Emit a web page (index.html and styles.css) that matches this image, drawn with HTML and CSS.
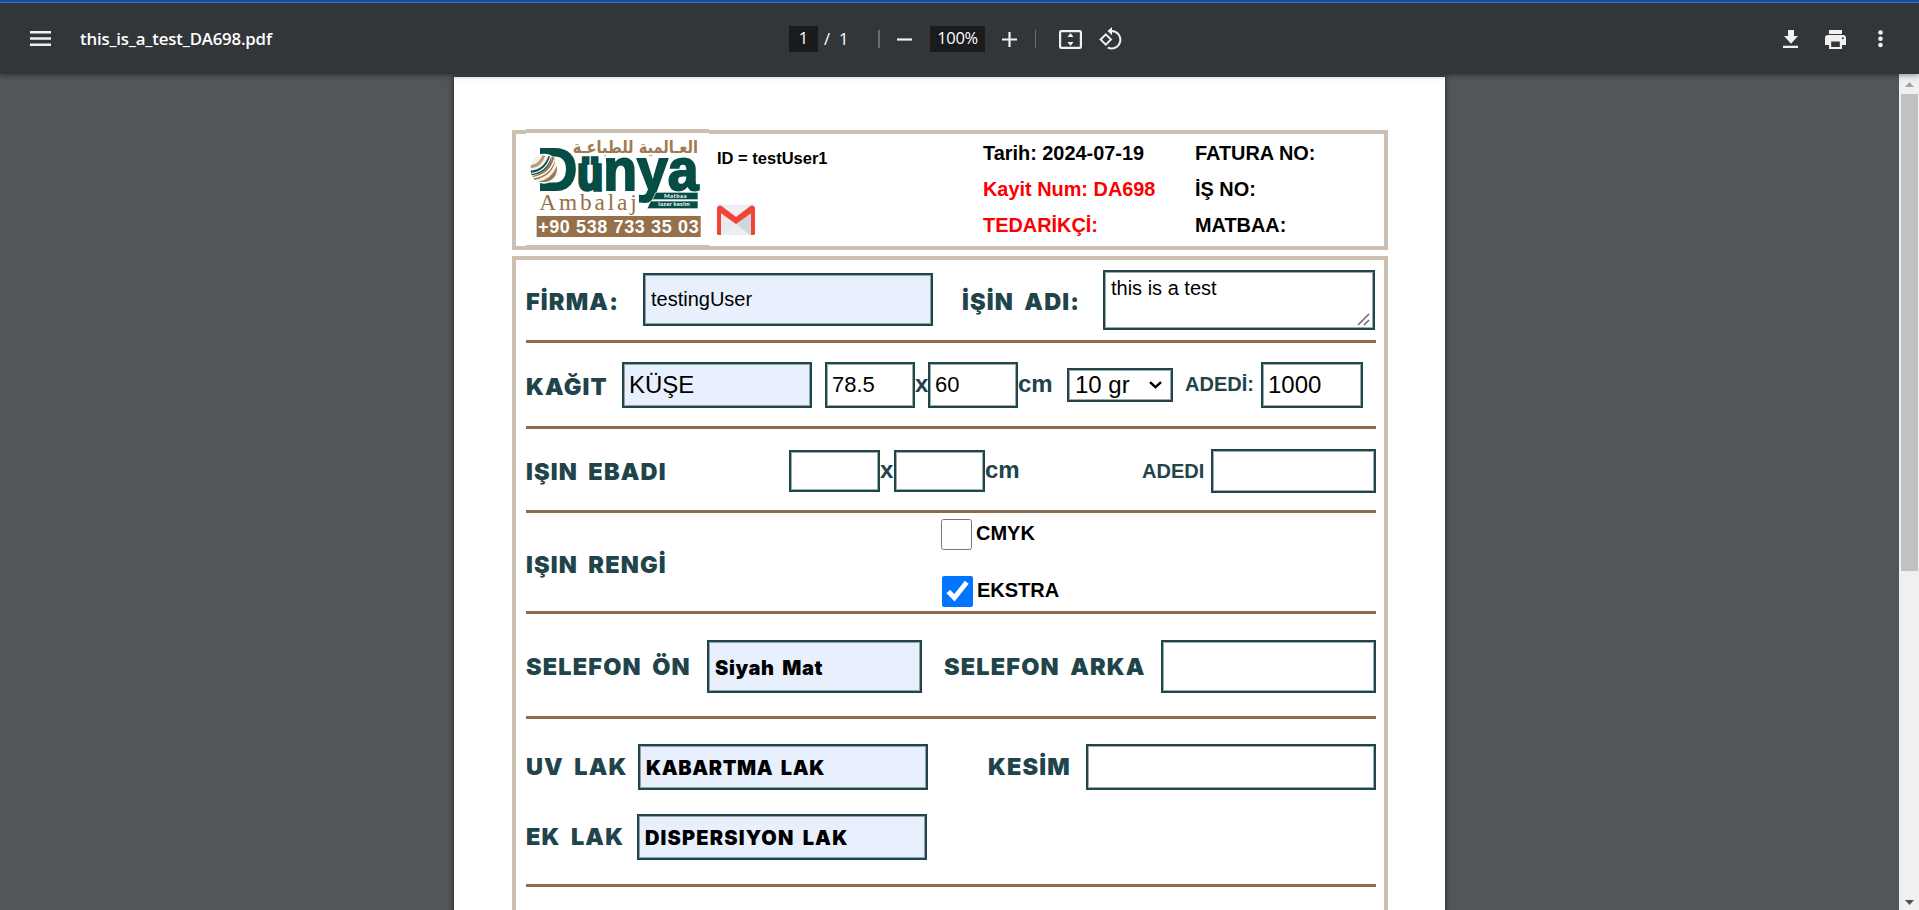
FILE: index.html
```html
<!DOCTYPE html>
<html lang="tr">
<head>
<meta charset="utf-8">
<title>this_is_a_test_DA698.pdf</title>
<link rel="stylesheet" href="styles.css">
</head>
<body>
<header class="toolbar">
  <div class="side left">
    <svg class="menu" width="21" height="16" viewBox="0 0 21 16"><path d="M0 1.3h21M0 7.5h21M0 13.7h21" stroke="#f1f1f1" stroke-width="2.4"/></svg>
    <span class="filename">this_is_a_test_DA698.pdf</span>
  </div>
  <div class="controls">
    <span class="field page-no">1</span><span class="slash">/</span><span class="total">1</span>
    <i class="divider wide"></i>
    <svg class="minus" width="15" height="15" viewBox="0 0 15 15"><path d="M0 7.5h15" stroke="#f1f1f1" stroke-width="2.2"/></svg>
    <span class="field zoom">100%</span>
    <svg class="plus" width="15" height="15" viewBox="0 0 15 15"><path d="M0 7.5h15M7.5 0v15" stroke="#f1f1f1" stroke-width="2.2"/></svg>
    <i class="divider"></i>
    <svg class="fit" width="23" height="19" viewBox="0 0 23 19"><rect x="1.1" y="1.1" width="20.8" height="16.8" rx="1.2" fill="none" stroke="#f1f1f1" stroke-width="2.2"/><path d="M11.500 3l3 4h-6zM11.500 16l3-4h-6z" fill="#f1f1f1"/></svg>
    <svg class="rotate" width="23" height="23" viewBox="0 0 23 23"><path d="M1.600 12.500L6.800 7.300l5.200 5.200-5.200 5.200z" fill="none" stroke="#f1f1f1" stroke-width="1.900"/><path d="M9.500 4h3a8.700 8.700 0 1 1-3.700 16.500" fill="none" stroke="#f1f1f1" stroke-width="2"/><path d="M13 0v8.200L8.500 4.100z" fill="#f1f1f1"/></svg>
  </div>
  <div class="side right">
    <svg width="16" height="19" viewBox="0 0 16 19"><path d="M5 0h6v6h4L8 13.800 1 6h4zM0 15.800h15v2.200H0z" fill="#f1f1f1"/></svg>
    <svg class="print" width="21" height="19" viewBox="0 0 21 19"><path d="M4 0h13v4H4z M3 5h15a3 3 0 0 1 3 3v7h-4v4H4v-4H0V8a3 3 0 0 1 3-3z" fill="#f1f1f1"/><path d="M6.200 11.500h8.600v5.500H6.200z" fill="#323639"/><circle cx="17.800" cy="8.300" r="1" fill="#323639"/></svg>
    <svg class="dots" width="5" height="18" viewBox="0 0 5 18"><g fill="#f1f1f1"><circle cx="2.500" cy="2.500" r="2.300"/><circle cx="2.500" cy="8.700" r="2.300"/><circle cx="2.500" cy="15" r="2.300"/></g></svg>
  </div>
</header>
<div class="viewer">
  <main class="sheet">
    <section class="head">
      <svg class="logo" width="183" height="120" viewBox="0 0 183 120">
        <rect width="183" height="120" fill="#fff"/>
        <path d="M0 2h183M0 118h183" stroke="#cdbfb1" stroke-width="4"/>
        <g transform="translate(-26 -9) scale(.33333)">
          <text x="112" y="211" class="logo-name" textLength="484" lengthAdjust="spacingAndGlyphs">D<tspan class="logo-u">ü</tspan>nya</text>
          <text x="406" y="98" class="logo-arabic" text-anchor="middle" textLength="376" lengthAdjust="spacingAndGlyphs" direction="rtl">العـالمية للطباعـة</text>
          <circle cx="132" cy="146" r="45" fill="#fff"/>
          <circle cx="132" cy="146" r="41" fill="#f4efe8"/>
          <path d="M97 168q46-10 61-60l8 10q-6 50-62 62z" fill="#9b7852"/>
          <path d="M92 152q38-2 54-44l9 4q-12 48-60 54z" fill="#054d45"/>
          <path d="M113 186q42-8 58-48 2 40-34 48z" fill="#9b7852"/>
          <path d="M92 136q24-2 36-30l8 1q-12 34-43 38z" fill="#b59a7a"/>
          <path d="M95 160q42-4 57-50M100 173q50-8 64-56" fill="none" stroke="#fff" stroke-width="4"/>
          <path d="M468 217h126v22H457zM452 243h142v23H441z" fill="#054d45" stroke="#fff" stroke-width="2"/>
          <text x="526" y="234" class="logo-tag" text-anchor="middle" textLength="68">Matbaa</text>
          <text x="522" y="259" class="logo-tag" text-anchor="middle" textLength="94">lazer kesim</text>
          <text x="118" y="270" class="logo-sub" textLength="292">Ambalaj</text>
          <path d="M110 288h492v63H110z" fill="#95704a"/>
          <text x="114" y="340" class="logo-phone" textLength="482">+90 538 733 35 03</text>
        </g>
      </svg>
      <div class="user">
        <div class="user-id">ID = testUser1</div>
        <svg class="gmail" width="38" height="30" viewBox="0 0 38 30"><rect width="38" height="30" rx="2.500" fill="#e8ebee"/><path d="M19 19L34 8v22H31z" fill="#d0d6dd"/><path d="M19 19l14 11H5z" fill="#eceff1"/><path d="M3 1l16 12.500L35 1" fill="#eef0f2"/><path d="M0 28.500V3a3 3 0 0 1 4.600-2L19 12 33.400 1A3 3 0 0 1 38 3v25.500a1.500 1.500 0 0 1-1.500 1.500H34V8.200L19 19 4 8.200V30H1.500A1.500 1.500 0 0 1 0 28.500z" fill="#f44336"/></svg>
      </div>
      <div class="info"><div>Tarih: 2024-07-19</div><div class="red">Kayit Num: DA698</div><div class="red">TEDARİKÇİ:</div></div>
      <div class="info second"><div>FATURA NO:</div><div>İŞ NO:</div><div>MATBAA:</div></div>
    </section>
    <form class="form">
      <div class="row firm">
        <span class="label w-firm">FİRMA:</span><input class="input filled in-firm" value="testingUser">
        <span class="label w-title">İŞİN ADI:</span>
        <div class="area"><textarea class="input">this is a test</textarea>
        <svg class="grip" width="13" height="13" viewBox="0 0 13 13"><path d="M1 12L12 1M7 12l5-5" stroke="#666" stroke-width="1.500"/></svg></div>
      </div>
      <div class="row paper">
        <span class="label w-paper">KAĞIT</span><input class="input filled big in-paper" value="KÜŞE">
        <input class="input size gap-size" value="78.5"><span class="unit times">x</span><input class="input size" value="60"><span class="unit cm">cm</span>
        <span class="input select">10 gr<svg width="13" height="8" viewBox="0 0 13 8"><path d="M1 1.200l5.500 5L12 1.200" fill="none" stroke="#000" stroke-width="2.400"/></svg></span>
        <span class="small w-adedi">ADEDİ:</span><input class="input big in-count" value="1000">
      </div>
      <div class="row dims">
        <span class="label w-dims">IŞIN EBADI</span><input class="input size low"><span class="unit times">x</span><input class="input size low"><span class="unit cm">cm</span>
        <span class="small w-adedi2">ADEDI</span><input class="input in-count2">
      </div>
      <div class="row color">
        <span class="label w-color">IŞIN RENGİ</span>
        <div class="checks"><label class="check"><input type="checkbox"><span>CMYK</span></label><label class="check extra"><input type="checkbox" checked><span>EKSTRA</span></label></div>
      </div>
      <div class="row film">
        <span class="label w-film">SELEFON ÖN</span><input class="input filled heavy in-film" value="Siyah Mat">
        <span class="label w-film2">SELEFON ARKA</span><input class="input in-film">
      </div>
      <div class="row lak">
        <div class="line"><span class="label w-uv">UV LAK</span><input class="input filled heavy in-lak" value="KABARTMA LAK"><span class="label w-cut">KESİM</span><input class="input in-lak"></div>
        <div class="line"><span class="label w-ek">EK LAK</span><input class="input filled heavy wide-text in-lak" value="DISPERSIYON LAK"></div>
      </div>
    </form>
  </main>
  <div class="scrollbar">
    <svg width="9" height="5" viewBox="0 0 9 5"><path d="M0 5L4.500 0 9 5z" fill="#a3a3a3"/></svg>
    <div class="thumb"></div>
    <svg class="down" width="9" height="5" viewBox="0 0 9 5"><path d="M0 0h9L4.500 5z" fill="#505050"/></svg>
  </div>
</div>
</body>
</html>
```
FILE: styles.css
```css
* { box-sizing: border-box; }
body { margin: 0; height: 910px; overflow: hidden; background: #525659; font-family: "Liberation Sans", Arial, sans-serif; display: flex; flex-direction: column; }
svg { display: block; flex: none; }

.toolbar { position: relative; z-index: 2; flex: none; height: 74px; display: flex; align-items: center; background: linear-gradient(#15509c 2px, #3f74b5 2px, #3f74b5 3px, #323639 3px); box-shadow: 0 1px 6px rgba(0,0,0,.45); color: #fff; font-family: "Open Sans", "Noto Sans", sans-serif; padding: 4px 0 0 30px; }
.side { display: flex; align-items: center; }
.left { width: 759px; }
.filename { margin-left: 29px; padding-bottom: 2px; font-size: 16.800px; font-weight: 600; letter-spacing: -.18px; white-space: nowrap; }
.controls { display: flex; align-items: center; width: 960px; font-size: 16.500px; }
.field { background: #191b1c; height: 26px; line-height: 24px; text-align: center; }
.page-no { width: 29px; }
.slash { margin-left: 6px; width: 15px; padding-bottom: 2px; }
.total { width: 11px; padding-bottom: 2px; }
.divider { width: 1px; height: 18px; background: #6a6d70; margin-left: 18px; }
.divider.wide { width: 2px; margin-left: 28px; }
.minus { margin-left: 17px; }
.zoom { margin-left: 18px; width: 55px; letter-spacing: -.3px; }
.plus { margin-left: 17px; }
.fit { margin-left: 23px; }
.rotate { margin-left: 17px; margin-top: -1px; }
.right { margin-left: 34px; }
.print { margin-left: 26px; }
.dots { margin-left: 32px; }

.viewer { flex: 1; min-height: 0; display: flex; justify-content: space-between; padding-left: 454px; overflow: hidden; }
.sheet { width: 991px; height: 1400px; margin-top: 3px; padding: 53px 57px 0 58px; background: #fff; box-shadow: 0 0 6px rgba(0,0,0,.6); }
.scrollbar { width: 20px; height: 836px; background: #f0f0f0; display: flex; flex-direction: column; align-items: center; padding: 8px 0 5px; }
.thumb { width: 17px; height: 477px; margin-top: 7px; background: #c1c1c1; }
.down { margin-top: auto; }

.head { height: 120px; border: 4px solid #cdbfb1; padding-left: 10px; display: flex; align-items: flex-start; font-weight: 700; font-size: 20px; }
.logo { margin-top: -5px; }
.logo-arabic { font: 700 50px "DejaVu Sans", sans-serif; fill: #a07a50; }
.logo-name { font: 700 178px "Liberation Sans", Arial, sans-serif; fill: #054d45; stroke: #054d45; stroke-width: 6px; }
.logo-u { font-size: 136px; stroke-width: 10px; }
.logo-tag { font: 700 18px Lato, sans-serif; fill: #fff; }
.logo-sub { font: 400 70px "Liberation Serif", serif; fill: #95704a; }
.logo-phone { font: 700 54px "Liberation Sans", Arial, sans-serif; fill: #fff; }
.user { flex: none; width: 274px; padding: 15px 0 0 8px; }
.user-id { font-size: 16.500px; line-height: 18px; }
.gmail { margin-top: 38px; }
.info { flex: none; width: 212px; padding-top: 1px; line-height: 36px; white-space: nowrap; font-size: 19.900px; }
.second { width: 160px; }
.red { color: #fb0000; }

.form { margin-top: 6px; border: 4px solid #cdbfb1; padding: 0 8px 0 10px; height: 1200px; }
.row { display: flex; align-items: center; border-bottom: 3px solid #8b6b4d; }
.firm { height: 83px; }
.paper { height: 86px; }
.dims { height: 84px; padding-top: 3px; }
.color { height: 101px; align-items: flex-start; }
.film { height: 105px; padding-top: 2px; }
.lak { height: 168px; flex-direction: column; align-items: stretch; padding-top: 25px; gap: 24px; }
.line { display: flex; align-items: center; }

.label { flex: none; font-family: Inter, "Liberation Sans", sans-serif; font-weight: 900; font-size: 23.500px; line-height: 28px; letter-spacing: 1.150px; word-spacing: 4.500px; color: #21444a; white-space: nowrap; }
.firm .label, .paper .label { padding-top: 4px; }
.dims .label { padding-top: 1px; }
.w-firm { width: 117px; }
.w-title { width: 141px; margin-left: 29px; }
.w-paper { width: 96px; }
.w-dims { width: 263px; }
.color .label { width: 415px; padding-top: 38px; }
.film .label { padding-top: 1px; }
.w-film { width: 181px; }
.w-film2 { width: 217px; margin-left: 22px; }
.w-uv { width: 112px; }
.w-cut { width: 98px; margin-left: 60px; }
.w-ek { width: 111px; }

.input { flex: none; margin: 0; border: 2px solid #21464a; box-shadow: inset 0 0 0 1px rgba(33,70,74,.45); border-radius: 0; background: #fff; color: #000; font: 400 20px "Liberation Sans", Arial, sans-serif; padding: 0 6px; outline: 0; }
.filled { background: #e8effd; }
.big { font-size: 24px; height: 46px; padding: 0 5px; }
.in-firm { width: 290px; height: 53px; margin-top: -1px; }
.area { position: relative; width: 272px; height: 60px; }
.area .input { display: block; width: 272px; height: 60px; padding: 5px 6px; resize: none; overflow: hidden; line-height: 23px; }
.grip { position: absolute; right: 5px; bottom: 4px; }
.in-paper { width: 190px; }
.size { width: 90px; height: 46px; font-size: 22px; padding: 0 5px; }
.gap-size { margin-left: 13px; }
.dims .low { width: 91px; height: 42px; }
.unit { font-weight: 700; font-size: 24px; line-height: 28px; color: #21444a; padding-bottom: 2px; }
.times { width: 14px; }
.paper .times { width: 13px; }
.cm { width: 49px; }
.select { display: flex; align-items: center; justify-content: space-between; width: 106px; height: 34px; font-size: 24px; padding-right: 9px; }
.small { font-weight: 700; font-size: 20px; color: #21444a; }
.dims .small { padding-top: 1px; }
.w-adedi { width: 76px; margin-left: 12px; }
.in-count { width: 102px; }
.w-adedi2 { width: 69px; margin-left: 108px; }
.in-count2 { width: 165px; height: 44px; }
.checks { padding-top: 6px; }
.check { display: flex; align-items: center; height: 31px; font-weight: 700; font-size: 20px; line-height: 28px; }
.check input { width: 31px; height: 31px; margin: 0 4px 0 0; }
.check span { padding-bottom: 4px; }
.extra { margin: 26px 0 0 1px; }
.in-film { width: 215px; height: 53px; }
.heavy { font-family: Inter, "Liberation Sans", sans-serif; font-weight: 900; font-size: 20px; letter-spacing: .600px; word-spacing: 3px; padding-top: 2px; }
.wide-text { letter-spacing: 1.150px; }
.film .heavy { padding-top: 4px; }
.in-lak { width: 290px; height: 46px; }
```
